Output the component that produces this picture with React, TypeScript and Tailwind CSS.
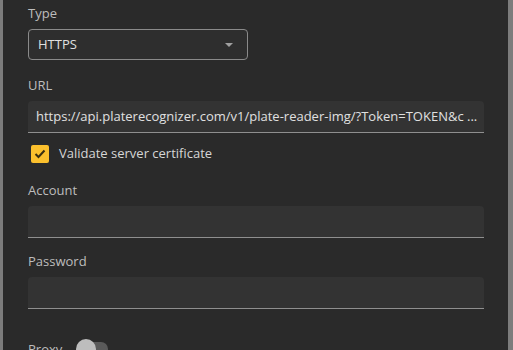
export default function App() {
  const font = { fontFamily: '"Open Sans", "Noto Sans", sans-serif' };

  return (
    <div className="flex h-[350px] w-[513px] overflow-hidden bg-[#2a2a2a]" style={font}>
      <div className="w-[3px] shrink-0 bg-[#7c7c7c]" />
      <div className="flex flex-1 flex-col pl-[25px] pr-[24px] pt-[4px] text-[13px] [&>*]:shrink-0">
        <label className="h-[18px] leading-[18px] text-[#bdbdbd]">Type</label>
        <div className="mt-[7px] flex h-[31px] w-[220px] items-center justify-between rounded-[4px] border border-[#8a8a8a] bg-[#2e2e2e] pl-[9px] pr-[14px] text-[#e0e0e0]">
          <span>HTTPS</span>
          <svg width="8" height="4" viewBox="0 0 8 4">
            <path d="M0 0h8L4 4z" fill="#a0a0a0" />
          </svg>
        </div>

        <label className="mt-[16px] h-[18px] leading-[18px] text-[#bdbdbd]">URL</label>
        <div className="mt-[7px] flex h-[32px] items-center overflow-hidden whitespace-nowrap rounded-t-[4px] border-b border-[#8f8f8f] bg-[#333333] pl-[8px] pr-[6px] text-[#e0e0e0]">
          https://api.platerecognizer.com/v1/plate-reader-img/?Token=TOKEN&amp;c ...
        </div>

        <div className="mt-[11px] flex items-center">
          <div className="ml-[3px] flex h-[18px] w-[18px] items-center justify-center rounded-[2px] bg-[#fbc02d]">
            <svg width="12" height="10" viewBox="0 0 12 10">
              <path d="M1.5 5l3 3 6-6.5" fill="none" stroke="#3a2f10" strokeWidth="2" />
            </svg>
          </div>
          <span className="ml-[10px] text-[#d6d6d6]">Validate server certificate</span>
        </div>

        <label className="mt-[17px] h-[18px] leading-[18px] text-[#bdbdbd]">Account</label>
        <div className="mt-[7px] h-[32px] rounded-t-[4px] border-b border-[#8f8f8f] bg-[#333333]" />

        <label className="mt-[14px] h-[18px] leading-[18px] text-[#bdbdbd]">Password</label>
        <div className="mt-[7px] h-[32px] rounded-t-[4px] border-b border-[#8f8f8f] bg-[#333333]" />

        <div className="mt-[31px] flex items-center">
          <span className="leading-[18px] text-[#bdbdbd]">Proxy</span>
          <div className="relative ml-[16px] h-[14px] w-[30px] rounded-full bg-[#5a5a5a]">
            <div className="absolute -top-[3px] -left-[2px] h-[20px] w-[20px] rounded-full bg-[#bdbdbd]" />
          </div>
        </div>
      </div>
      <div className="w-[5px] shrink-0 bg-[#7c7c7c]" />
    </div>
  );
}
